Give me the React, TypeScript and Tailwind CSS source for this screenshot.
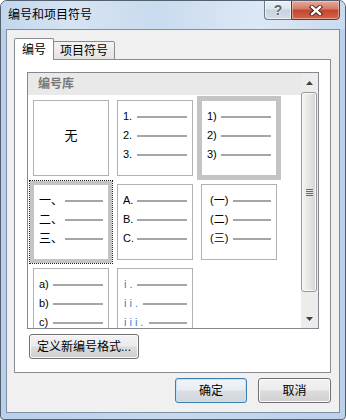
import React from "react";

const F = "font-['Liberation_Sans','Noto_Sans_CJK_SC',sans-serif]";

function Line({ label, w, cls }: { label: React.ReactNode; w: string; cls?: string }) {
  return (
    <div className="flex items-center h-[19px]">
      <span className={`${w} shrink-0 whitespace-pre leading-none ${cls ?? "text-[11px] text-black"}`}>{label}</span>
      <div className="flex-1 h-[2px] bg-[#a6a6a6]" />
    </div>
  );
}

function Cell({ children, state }: { children?: React.ReactNode; state?: "sel" | "focus" }) {
  const base = "w-[76px] h-[76px] bg-white border box-border pl-[5px] pr-[5px] pt-[6px]";
  const st =
    state === "sel"
      ? "border-[#c4c4c4] ring-4 ring-[#c4c4c4]"
      : state === "focus"
      ? "border-[#c4c4c4] ring-[3px] ring-[#c4c4c4] outline-1 outline-dotted outline-[#202020] outline-offset-3"
      : "border-[#b1b1b1]";
  return <div className={`${base} ${st}`}>{children}</div>;
}

const btn =
  "h-[25px] border border-[#707070] rounded-[3px] bg-[linear-gradient(to_bottom,#f3f3f3_0%,#ebebeb_48%,#dcdcdc_52%,#cfcfcf_100%)] shadow-[inset_0_0_0_1px_#fbfbfb] flex items-center justify-center text-[12px] leading-none text-black";

export default function App() {
  return (
    <div
      className={`w-[346px] h-[420px] flex flex-col border border-[#55606e] rounded-t-[7px] rounded-b-[4px] overflow-hidden bg-[linear-gradient(to_right,#b9d0ea,#c6d9ee_50%,#bcd2eb)] ${F}`}
    >
      {/* title bar */}
      <div className="h-[28px] flex items-start bg-[linear-gradient(to_right,#c2d6ed_0%,#d6e4f3_20%,#c9dbef_45%,#dce8f5_75%,#c9dbef_100%)]">
        <span className="pl-[7px] pt-[7px] text-[12px] leading-[14px] text-black">编号和项目符号</span>
        <div className="ml-auto mr-[5px] -mt-px flex">
          <div className="w-[27px] h-[20px] border border-[#6c7b8c] border-r-0 rounded-bl-[4px] bg-[linear-gradient(to_bottom,#e9eff6_0%,#dbe4ee_45%,#c7d3e1_50%,#d3dde9_100%)] shadow-[inset_0_0_0_1px_rgba(255,255,255,0.6)] flex items-center justify-center">
            <span className="text-[14px] font-bold leading-none text-[#5a6470] [text-shadow:0_0_2px_#ffffff,0_0_1px_#ffffff]">?</span>
          </div>
          <div className="w-[49px] h-[20px] border border-[#6b3328] rounded-br-[4px] bg-[linear-gradient(to_bottom,#e8a99b_0%,#d47966_45%,#c2452c_50%,#d3664d_100%)] shadow-[inset_0_0_0_1px_rgba(255,220,210,0.5)] flex items-center justify-center">
            <svg width="14" height="11" viewBox="0 0 14 11">
              <path d="M3 2 L11 9 M11 2 L3 9" stroke="#3a1a14" strokeWidth="4.2" strokeLinecap="square" />
              <path d="M3 2 L11 9 M11 2 L3 9" stroke="#ffffff" strokeWidth="2.4" strokeLinecap="square" />
            </svg>
          </div>
        </div>
      </div>

      {/* client */}
      <div className="mx-[5px] mb-[6px] flex-1 border border-[#7f8fa3] bg-[#f0f0f0] flex flex-col pl-[7px] pr-[8px] pt-[8px]">
        {/* tabs */}
        <div className="h-[22px] -mb-px flex items-end relative z-10">
          <div className="w-[40px] h-[22px] bg-white border border-b-0 border-[#898c95] rounded-t-[2px] flex items-center justify-center text-[12px] leading-none text-black relative z-10">
            编号
          </div>
          <div className="-ml-px w-[62px] h-[19px] border border-[#898c95] rounded-t-[2px] bg-[linear-gradient(to_bottom,#f2f2f2,#e4e4e4)] flex items-center justify-center text-[12px] leading-none text-black">
            项目符号
          </div>
        </div>

        {/* panel */}
        <div className="h-[314px] border border-[#898c95] bg-white pl-[12px] pt-[12px] flex flex-col">
          <div className="w-[292px] h-[257px] border border-[#828790] flex">
            <div className="flex-1 flex flex-col overflow-hidden">
              <div className="h-[22px] shrink-0 bg-[#e9e9e9] pl-[10px] flex items-center text-[12px] leading-none text-[#777777] font-semibold">
                编号库
              </div>
              <div className="pt-[5px] pl-[5px] grid grid-cols-[76px_76px_76px] gap-[8px]">
                <Cell>
                  <div className="h-full -mt-[6px] -ml-[5px] -mr-[5px] flex items-center justify-center text-[13px] leading-none text-black">无</div>
                </Cell>
                <Cell>
                  <Line label="1." w="w-[14px]" />
                  <Line label="2." w="w-[14px]" />
                  <Line label="3." w="w-[14px]" />
                </Cell>
                <Cell state="sel">
                  <Line label="1)" w="w-[14px]" />
                  <Line label="2)" w="w-[14px]" />
                  <Line label="3)" w="w-[14px]" />
                </Cell>
                <Cell state="focus">
                  <Line label="一、" w="w-[26px]" cls="text-[12px] text-black" />
                  <Line label="二、" w="w-[26px]" cls="text-[12px] text-black" />
                  <Line label="三、" w="w-[26px]" cls="text-[12px] text-black" />
                </Cell>
                <Cell>
                  <Line label="A." w="w-[14px]" />
                  <Line label="B." w="w-[14px]" />
                  <Line label="C." w="w-[14px]" />
                </Cell>
                <Cell>
                  <Line label=" (一)" w="w-[26px]" cls="text-[11px] text-black" />
                  <Line label=" (二)" w="w-[26px]" cls="text-[11px] text-black" />
                  <Line label=" (三)" w="w-[26px]" cls="text-[11px] text-black" />
                </Cell>
                <Cell>
                  <Line label="a)" w="w-[14px]" />
                  <Line label="b)" w="w-[14px]" />
                  <Line label="c)" w="w-[14px]" />
                </Cell>
                <Cell>
                  <Line label="i." w="w-[14px]" cls="text-[11px] text-[#2f82d4] tracking-[3px] pl-[1px]" />
                  <Line label="ii." w="w-[20px]" cls="text-[11px] text-[#2f82d4] tracking-[3px] pl-[1px]" />
                  <Line label="iii." w="w-[26px]" cls="text-[11px] text-[#2f82d4] tracking-[3px] pl-[1px]" />
                </Cell>
              </div>
            </div>
            {/* scrollbar */}
            <div className="w-[17px] flex flex-col bg-[#ececec]">
              <div className="h-[19px] flex items-center justify-center">
                <svg width="7" height="4" viewBox="0 0 7 4">
                  <path d="M0 4 L3.5 0 L7 4 Z" fill="#404040" />
                </svg>
              </div>
              <div className="h-[200px] mr-[1px] rounded-[3px] border border-[#979797] bg-[linear-gradient(to_right,#f4f4f4,#e6e6e6_50%,#d3d3d3)] shadow-[inset_0_0_0_1px_#fafafa] flex flex-col items-center justify-center gap-[1px]">
                <div className="w-[7px] h-[1px] bg-[#6a6a6a]" />
                <div className="w-[7px] h-[1px] bg-[#6a6a6a]" />
                <div className="w-[7px] h-[1px] bg-[#6a6a6a]" />
                <div className="w-[7px] h-[1px] bg-[#6a6a6a]" />
              </div>
              <div className="flex-1" />
              <div className="h-[19px] flex items-center justify-center">
                <svg width="7" height="4" viewBox="0 0 7 4">
                  <path d="M0 0 L7 0 L3.5 4 Z" fill="#404040" />
                </svg>
              </div>
            </div>
          </div>
          <div className={`mt-[5px] ml-[2px] w-[110px] ${btn}`}>定义新编号格式...</div>
        </div>

        {/* buttons */}
        <div className="mt-[5px] flex justify-end gap-[11px]">
          <div className="w-[72px] h-[25px] border border-[#3c7fb1] rounded-[3px] bg-[linear-gradient(to_bottom,#f1f4f7_0%,#e9edf1_48%,#dadfe4_52%,#cfd5db_100%)] shadow-[inset_0_0_0_1px_#bfe3f7] flex items-center justify-center text-[12px] leading-none text-black">
            确定
          </div>
          <div className={`w-[73px] ${btn}`}>取消</div>
        </div>
      </div>
    </div>
  );
}
